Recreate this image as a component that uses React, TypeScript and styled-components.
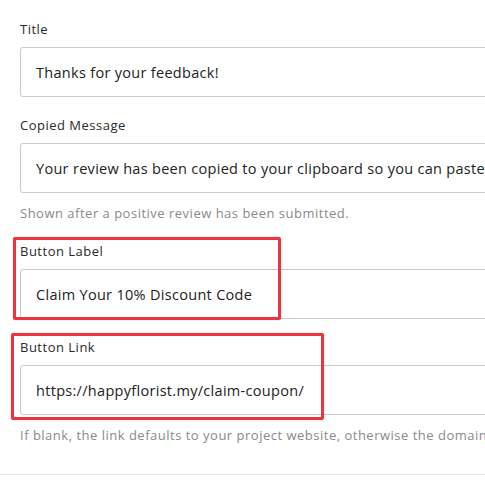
import React from "react";
import styled, { createGlobalStyle } from "styled-components";

const Global = createGlobalStyle`
  html, body { margin: 0; padding: 0; background: #fff; overflow: hidden; }
  body { font-family: "Open Sans", "Liberation Sans", sans-serif; color: #222; }
`;

const Page = styled.div`
  width: 485px;
  height: 493px;
  overflow: hidden;
  display: flex;
  flex-direction: column;
`;

const Form = styled.div`
  display: flex;
  flex-direction: column;
  padding: 20px 0 0 20px;
`;

const Field = styled.div<{ $gap: number }>`
  position: relative;
  display: flex;
  flex-direction: column;
  margin-bottom: ${(p) => p.$gap}px;
`;

const Label = styled.label`
  font-size: 13px;
  line-height: 18px;
  color: #2a2a2a;
  margin-bottom: 9px;
  letter-spacing: 0.5px;
`;

const Input = styled.div`
  box-sizing: border-box;
  width: 480px;
  height: 50px;
  border: 1px solid #c9c9c9;
  border-radius: 3px;
  padding: 0 15px;
  display: flex;
  align-items: center;
  font-size: 14.5px;
  letter-spacing: 0.3px;
  color: #222;
  white-space: nowrap;
  overflow: hidden;
`;

const Help = styled.div`
  font-size: 13px;
  line-height: 18px;
  color: #8a8a8a;
  margin-top: 11px;
  letter-spacing: 0.5px;
  white-space: nowrap;
`;

const Highlight = styled.div<{ $left: number; $top: number; $w: number; $h: number }>`
  position: absolute;
  left: ${(p) => p.$left}px;
  top: ${(p) => p.$top}px;
  width: ${(p) => p.$w}px;
  height: ${(p) => p.$h}px;
  box-sizing: border-box;
  border: 3px solid #ec3340;
  border-radius: 2px;
  box-shadow: 0 0 3px rgba(0, 0, 0, 0.12);
  pointer-events: none;
`;

const Divider = styled.hr`
  border: none;
  border-top: 1px solid #e6e6e6;
  margin: 0;
  width: 100%;
`;

export default function App() {
  return (
    <Page>
      <Global />
      <Form>
        <Field $gap={19}>
          <Label>Title</Label>
          <Input>Thanks for your feedback!</Input>
        </Field>
        <Field $gap={20}>
          <Label>Copied Message</Label>
          <Input>Your review has been copied to your clipboard so you can paste it</Input>
          <Help>Shown after a positive review has been submitted.</Help>
        </Field>
        <Field $gap={19}>
          <Label>Button Label</Label>
          <Input>Claim Your 10% Discount Code</Input>
          <Highlight $left={-7} $top={-5} $w={268} $h={83} />
        </Field>
        <Field $gap={30}>
          <Label>Button Link</Label>
          <Input>https://happyflorist.my/claim-coupon/</Input>
          <Help>If blank, the link defaults to your project website, otherwise the domain</Help>
          <Highlight $left={-9} $top={-5} $w={313} $h={87} />
        </Field>
      </Form>
      <Divider />
    </Page>
  );
}
